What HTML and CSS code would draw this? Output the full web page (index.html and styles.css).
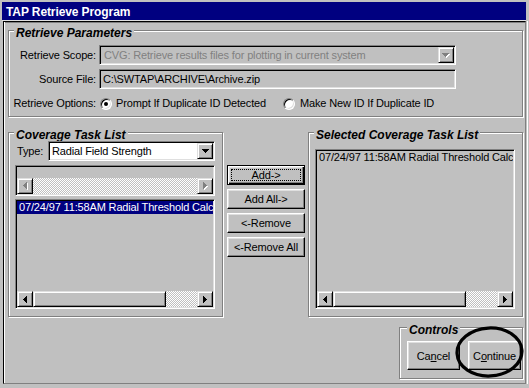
FILE: index.html
```html
<!DOCTYPE html>
<html lang="en">
<head>
  <meta charset="UTF-8">
  <meta name="viewport" content="width=device-width, initial-scale=1.0">
  <title>TAP Retrieve Program</title>
  <link rel="stylesheet" href="styles.css">
</head>
<body>
  <div class="window">
    <div class="titlebar">TAP Retrieve Program</div>
    <div class="client">

      <div class="group params">
        <div class="group-title">Retrieve Parameters</div>
        <div class="param-grid">
          <label class="param-label">Retrieve Scope:</label>
          <div class="field combo disabled">
            <span class="field-text">CVG: Retrieve results files for plotting in current system</span>
            <span class="raised drop-btn">
              <svg width="8" height="5" viewBox="0 0 8 5"><path d="M1 1h7v1h-1v1h-1v1h-1v1h-1v-1h-1v-1h-1v-1h-1z" fill="#fff"/><path d="M0 0h7v1h-1v1h-1v1h-1v1h-1v-1h-1v-1h-1v-1h-1z" fill="#808080"/></svg>
            </span>
          </div>
          <label class="param-label">Source File:</label>
          <div class="field readonly">
            <span class="field-text">C:\SWTAP\ARCHIVE\Archive.zip</span>
          </div>
          <label class="param-label">Retrieve Options:</label>
          <div class="options">
            <span class="radio checked"></span>
            <span class="option-text">Prompt If Duplicate ID Detected</span>
            <span class="radio second"></span>
            <span class="option-text">Make New ID If Duplicate ID</span>
          </div>
        </div>
      </div>

      <div class="lists">
        <div class="group task-group">
          <div class="group-title">Coverage Task List</div>
          <div class="type-row">
            <label class="type-label">Type:</label>
            <div class="field combo white">
              <span class="field-text">Radial Field Strength</span>
              <span class="raised drop-btn">
                <svg width="7" height="4" viewBox="0 0 7 4"><path d="M0 0h7v1h-1v1h-1v1h-1v1h-1v-1h-1v-1h-1v-1h-1z" fill="#000"/></svg>
              </span>
            </div>
          </div>
          <div class="field listbox short">
            <div class="list-items"></div>
            <div class="hscroll">
              <span class="raised sbtn">
                <svg width="5" height="8" viewBox="0 0 5 8"><path d="M4 1h1v7h-1v-1h-1v-1h-1v-1h-1v-1h1v-1h1v-1h1z" fill="#fff"/><path d="M3 0h1v7h-1v-1h-1v-1h-1v-1h-1v-1h1v-1h1v-1h1z" fill="#808080"/></svg>
              </span>
              <span class="track"></span>
              <span class="raised sbtn">
                <svg width="5" height="8" viewBox="0 0 5 8"><path d="M1 1h1v1h1v1h1v1h1v1h-1v1h-1v1h-1v1h-1z" fill="#fff"/><path d="M0 0h1v1h1v1h1v1h1v1h-1v1h-1v1h-1v1h-1z" fill="#808080"/></svg>
              </span>
            </div>
          </div>
          <div class="field listbox tall">
            <div class="list-items">
              <div class="item selected">07/24/97 11:58AM Radial Threshold Calc</div>
            </div>
            <div class="hscroll">
              <span class="raised sbtn">
                <svg width="4" height="7" viewBox="0 0 4 7"><path d="M3 0h1v7h-1v-1h-1v-1h-1v-1h-1v-1h1v-1h1v-1h1z" fill="#000"/></svg>
              </span>
              <span class="raised thumb"></span>
              <span class="track"></span>
              <span class="raised sbtn">
                <svg width="4" height="7" viewBox="0 0 4 7"><path d="M0 0h1v1h1v1h1v1h1v1h-1v1h-1v1h-1v1h-1z" fill="#000"/></svg>
              </span>
            </div>
          </div>
        </div>

        <div class="move-buttons">
          <div class="btn default"><span class="focus">Add-&gt;</span></div>
          <div class="btn">Add All-&gt;</div>
          <div class="btn">&lt;-Remove</div>
          <div class="btn">&lt;-Remove All</div>
        </div>

        <div class="group task-group">
          <div class="group-title">Selected Coverage Task List</div>
          <div class="field listbox selected-list">
            <div class="list-items">
              <div class="item">07/24/97 11:58AM Radial Threshold Calc</div>
            </div>
            <div class="hscroll">
              <span class="raised sbtn">
                <svg width="4" height="7" viewBox="0 0 4 7"><path d="M3 0h1v7h-1v-1h-1v-1h-1v-1h-1v-1h1v-1h1v-1h1z" fill="#000"/></svg>
              </span>
              <span class="raised thumb"></span>
              <span class="track"></span>
              <span class="raised sbtn">
                <svg width="4" height="7" viewBox="0 0 4 7"><path d="M0 0h1v1h1v1h1v1h1v1h-1v1h-1v1h-1v1h-1z" fill="#000"/></svg>
              </span>
            </div>
          </div>
        </div>
      </div>

      <div class="bottom-row">
        <div class="group controls">
          <div class="group-title">Controls</div>
          <div class="control-buttons">
            <div class="btn big">Ca<u>n</u>cel</div>
            <div class="btn big">C<u>o</u>ntinue</div>
          </div>
        </div>
      </div>

    </div>

    <!-- hand drawn mark around the Continue button -->
    <svg class="mark" width="529" height="388" viewBox="0 0 529 388">
      <ellipse cx="489.5" cy="352" rx="32.5" ry="24" fill="none" stroke="#000" stroke-width="3.2" transform="rotate(-3 489.5 352)"/>
    </svg>
  </div>
</body>
</html>
```

FILE: styles.css
```css
html, body {
  margin: 0;
}
body {
  width: 529px;
  height: 388px;
  overflow: hidden;
  background: #c0c0c0;
  font-family: "Liberation Sans", Arial, sans-serif;
  font-size: 11px;
  letter-spacing: -0.15px;
  color: #000;
}
.window {
  position: relative;
  height: 388px;
  padding-top: 2px;
  box-sizing: border-box;
}
.titlebar {
  margin-left: 2px;
  width: 524px;
  height: 19px;
  padding-left: 4px;
  box-sizing: border-box;
  border-bottom: 1px solid #dfdfdf;
  background: #000080;
  color: #fff;
  font-size: 12px;
  font-weight: bold;
  letter-spacing: -0.1px;
  line-height: 21px;
  white-space: nowrap;
}
.client {
  margin-left: 3px;
  width: 523px;
  height: 363px;
  box-sizing: border-box;
  padding: 8px 0 0 4px;
  border: 1px solid #808080;
  border-top-color: #000;
  border-left-color: #000;
  box-shadow: inset 1px 0 #fff, inset 0 1px #808080, 1px 0 #c0c0c0, 2px 0 #fff;
}

/* etched group box */
.group {
  box-sizing: border-box;
  border: 1px solid #808080;
  box-shadow: 1px 1px 0 #fff, inset 1px 1px 0 #fff;
}
.group-title {
  width: fit-content;
  margin: -4px 0 0 5px;
  padding: 0 2px;
  background: #c0c0c0;
  font-size: 12px;
  font-weight: bold;
  font-style: italic;
  line-height: 13px;
  letter-spacing: 0;
  white-space: nowrap;
}

/* sunken fields */
.field {
  box-sizing: border-box;
  border: 1px solid;
  border-color: #808080 #fff #fff #808080;
  box-shadow: inset 1px 1px #000, inset -1px -1px #dfdfdf;
  padding: 1px;
  background: #c0c0c0;
}
.field-text {
  flex: 1;
  padding-left: 2px;
  line-height: 16px;
  white-space: nowrap;
  overflow: hidden;
}
.combo {
  display: flex;
  align-items: center;
}
.combo.white {
  background: #fff;
}
.disabled .field-text {
  color: #808080;
  padding-left: 3px;
}
.readonly {
  display: flex;
}

/* raised 3d parts */
.raised {
  box-sizing: border-box;
  border: 1px solid;
  border-color: #dfdfdf #000 #000 #dfdfdf;
  box-shadow: inset 1px 1px #fff, inset -1px -1px #808080;
  background: #c0c0c0;
}
.drop-btn {
  flex: none;
  width: 16px;
  height: 16px;
  display: flex;
  align-items: center;
  justify-content: center;
}

/* retrieve parameters */
.params {
  width: 515px;
  height: 87px;
}
.param-grid {
  display: grid;
  grid-template-columns: 87px 357px;
  grid-template-rows: 20px 20px 21px;
  column-gap: 3px;
  row-gap: 4px;
  margin-top: 5px;
}
.param-label {
  align-self: center;
  text-align: right;
  line-height: 13px;
  white-space: nowrap;
}
.options {
  display: flex;
  align-items: center;
  line-height: 13px;
  white-space: nowrap;
}
.radio {
  flex: none;
  box-sizing: border-box;
  width: 12px;
  height: 12px;
  margin-left: 1px;
  border-radius: 50%;
  border: 1px solid;
  border-color: #808080 #fff #fff #808080;
  background: #fff;
  box-shadow: inset 1px 1px #000, inset -1px -1px #dfdfdf;
  display: flex;
  align-items: center;
  justify-content: center;
}
.radio.checked::after {
  content: "";
  width: 4px;
  height: 4px;
  border-radius: 50%;
  background: #000;
}
.radio.second {
  margin-left: 17px;
}
.option-text {
  margin-left: 4px;
}
.radio.second + .option-text {
  margin-left: 5px;
}

/* task lists */
.lists {
  display: flex;
  margin-top: 15px;
  width: 515px;
}
.task-group {
  width: 215px;
  height: 185px;
}
.type-row {
  display: flex;
  align-items: center;
  justify-content: space-between;
  width: 200px;
  margin: -1px 0 0 6px;
}
.type-label {
  padding-left: 2px;
  line-height: 13px;
}
.type-row .combo {
  width: 167px;
  height: 20px;
}
.listbox {
  display: flex;
  flex-direction: column;
  width: 200px;
  margin-left: 6px;
}
.listbox.short {
  height: 31px;
  margin-top: 4px;
}
.listbox.tall {
  height: 110px;
  margin-top: 3px;
}
.listbox.selected-list {
  height: 160px;
  margin-top: 7px;
}
.list-items {
  flex: 1;
  overflow: hidden;
}
.item {
  padding-left: 2px;
  line-height: 13px;
  white-space: nowrap;
  overflow: hidden;
}
.item.selected {
  background: #000080;
  color: #fff;
}
.hscroll {
  display: flex;
  height: 16px;
  flex: none;
}
.sbtn {
  flex: none;
  width: 16px;
  display: flex;
  align-items: center;
  justify-content: center;
}
.thumb {
  flex: none;
  width: 133px;
}
.track {
  flex: 1;
  background-image: conic-gradient(#fff 25%, #c0c0c0 0 50%, #fff 0 75%, #c0c0c0 0);
  background-size: 2px 2px;
}

/* push buttons */
.btn {
  box-sizing: border-box;
  display: flex;
  align-items: center;
  justify-content: center;
  border: 1px solid;
  border-color: #fff #000 #000 #fff;
  box-shadow: inset -1px -1px #808080, inset 1px 1px #dfdfdf;
  background: #c0c0c0;
  white-space: nowrap;
}
.btn.default {
  border-color: #000;
  box-shadow: inset 1px 1px #fff, inset -1px -1px #000, inset -2px -2px #808080, inset 2px 2px #dfdfdf;
}
.focus {
  flex: 1;
  align-self: stretch;
  margin: 3px;
  border: 1px dotted #000;
  display: flex;
  align-items: center;
  justify-content: center;
}
.move-buttons {
  display: flex;
  flex-direction: column;
  gap: 4px;
  width: 78px;
  margin: 33px 3px 0 4px;
}
.move-buttons .btn {
  height: 20px;
}

/* controls */
.bottom-row {
  display: flex;
  justify-content: flex-end;
  width: 515px;
  margin-top: 10px;
}
.controls {
  width: 124px;
  height: 52px;
}
.controls .group-title {
  margin-left: 7px;
}
.control-buttons {
  display: flex;
  gap: 8px;
  margin: 4px 0 0 7px;
}
.btn.big {
  width: 53px;
  height: 29px;
}

.mark {
  position: absolute;
  left: 0;
  top: 0;
  pointer-events: none;
}
```
